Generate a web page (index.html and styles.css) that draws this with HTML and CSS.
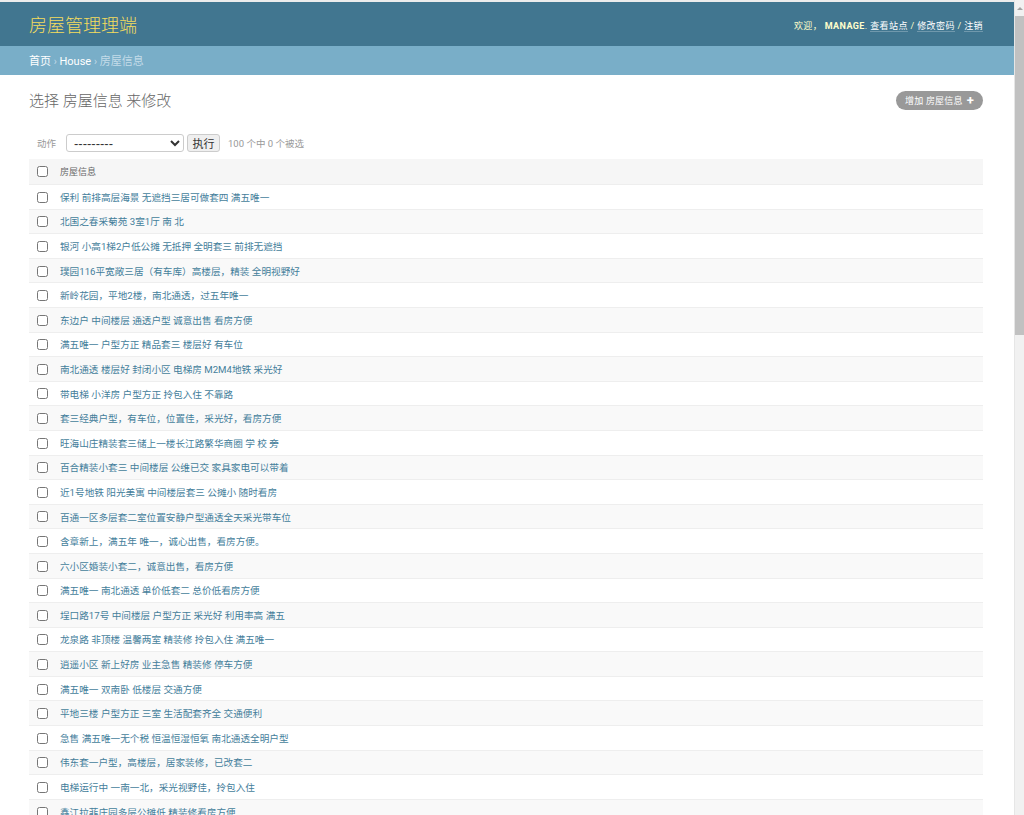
FILE: index.html
```html
<!DOCTYPE html>
<html lang="zh-hans">
<head>
<meta charset="utf-8">
<title>选择 房屋信息 来修改 | Django 站点管理员</title>
<link rel="stylesheet" href="styles.css">
</head>
<body>
<div class="page">
<div class="topline"></div>
<div id="header">
  <div class="branding"><h1 class="site-name">房屋管理理端</h1></div>
  <div class="user-tools">欢迎， <strong>manage</strong>. <a href="#">查看站点</a> / <a href="#">修改密码</a> / <a href="#">注销</a></div>
</div>
<div class="breadcrumbs"><a href="#">首页</a> <span class="sep">›</span> <a href="#">House</a> <span class="sep">›</span> 房屋信息</div>
<div id="content">
  <div class="content-head">
    <h1 class="page-title">选择 房屋信息 来修改</h1>
    <a href="#" class="addlink">增加 房屋信息 <span class="plus">+</span></a>
  </div>
  <div class="actions">
    <label class="action-label">动作</label>
    <select class="action-select"><option>---------</option></select>
    <button class="go-button" type="button">执行</button>
    <span class="action-counter">100 个中 0 个被选</span>
  </div>
  <table class="result-list">
    <thead>
      <tr><th class="cb-col"><input type="checkbox"></th><th class="title-col">房屋信息</th></tr>
    </thead>
    <tbody>
      <tr><td class="cb-col"><input type="checkbox"></td><th><a href="#">保利 前排高层海景 无遮挡三居可做套四 满五唯一</a></th></tr>
      <tr><td class="cb-col"><input type="checkbox"></td><th><a href="#">北国之春采菊苑 3室1厅 南 北</a></th></tr>
      <tr><td class="cb-col"><input type="checkbox"></td><th><a href="#">银河 小高1梯2户低公摊 无抵押 全明套三 前排无遮挡</a></th></tr>
      <tr><td class="cb-col"><input type="checkbox"></td><th><a href="#">璞园116平宽敞三居（有车库）高楼层，精装 全明视野好</a></th></tr>
      <tr><td class="cb-col"><input type="checkbox"></td><th><a href="#">新岭花园，平地2楼，南北通透，过五年唯一</a></th></tr>
      <tr><td class="cb-col"><input type="checkbox"></td><th><a href="#">东边户 中间楼层 通透户型 诚意出售 看房方便</a></th></tr>
      <tr><td class="cb-col"><input type="checkbox"></td><th><a href="#">满五唯一 户型方正 精品套三 楼层好 有车位</a></th></tr>
      <tr><td class="cb-col"><input type="checkbox"></td><th><a href="#">南北通透 楼层好 封闭小区 电梯房 M2M4地铁 采光好</a></th></tr>
      <tr><td class="cb-col"><input type="checkbox"></td><th><a href="#">带电梯 小洋房 户型方正 拎包入住 不靠路</a></th></tr>
      <tr><td class="cb-col"><input type="checkbox"></td><th><a href="#">套三经典户型，有车位，位置佳，采光好，看房方便</a></th></tr>
      <tr><td class="cb-col"><input type="checkbox"></td><th><a href="#">旺海山庄精装套三储上一楼长江路繁华商圈 学 校 旁</a></th></tr>
      <tr><td class="cb-col"><input type="checkbox"></td><th><a href="#">百合精装小套三 中间楼层 公维已交 家具家电可以带着</a></th></tr>
      <tr><td class="cb-col"><input type="checkbox"></td><th><a href="#">近1号地铁 阳光美寓 中间楼层套三 公摊小 随时看房</a></th></tr>
      <tr><td class="cb-col"><input type="checkbox"></td><th><a href="#">百通一区多层套二室位置安静户型通透全天采光带车位</a></th></tr>
      <tr><td class="cb-col"><input type="checkbox"></td><th><a href="#">含章新上，满五年 唯一，诚心出售，看房方便。</a></th></tr>
      <tr><td class="cb-col"><input type="checkbox"></td><th><a href="#">六小区婚装小套二，诚意出售，看房方便</a></th></tr>
      <tr><td class="cb-col"><input type="checkbox"></td><th><a href="#">满五唯一 南北通透 单价低套二 总价低看房方便</a></th></tr>
      <tr><td class="cb-col"><input type="checkbox"></td><th><a href="#">埕口路17号 中间楼层 户型方正 采光好 利用率高 满五</a></th></tr>
      <tr><td class="cb-col"><input type="checkbox"></td><th><a href="#">龙泉路 非顶楼 温馨两室 精装修 拎包入住 满五唯一</a></th></tr>
      <tr><td class="cb-col"><input type="checkbox"></td><th><a href="#">逍遥小区 新上好房 业主急售 精装修 停车方便</a></th></tr>
      <tr><td class="cb-col"><input type="checkbox"></td><th><a href="#">满五唯一 双南卧 低楼层 交通方便</a></th></tr>
      <tr><td class="cb-col"><input type="checkbox"></td><th><a href="#">平地三楼 户型方正 三室 生活配套齐全 交通便利</a></th></tr>
      <tr><td class="cb-col"><input type="checkbox"></td><th><a href="#">急售 满五唯一无个税 恒温恒湿恒氧 南北通透全明户型</a></th></tr>
      <tr><td class="cb-col"><input type="checkbox"></td><th><a href="#">伟东套一户型，高楼层，居家装修，已改套二</a></th></tr>
      <tr><td class="cb-col"><input type="checkbox"></td><th><a href="#">电梯运行中 一南一北，采光视野佳，拎包入住</a></th></tr>
      <tr><td class="cb-col"><input type="checkbox"></td><th><a href="#">鑫江拉菲庄园多层公摊低 精装修看房方便</a></th></tr>
      <tr><td class="cb-col"><input type="checkbox"></td><th><a href="#">中庭位置 安静舒适 南北通透 满二年</a></th></tr>
      <tr><td class="cb-col"><input type="checkbox"></td><th><a href="#">地铁口 精装两室 家具家电齐全 拎包入住</a></th></tr>
      <tr><td class="cb-col"><input type="checkbox"></td><th><a href="#">低总价 小户型 中间楼层 采光充足</a></th></tr>
      <tr><td class="cb-col"><input type="checkbox"></td><th><a href="#">学区房 满五唯一 楼层好 看房方便</a></th></tr>
      <tr><td class="cb-col"><input type="checkbox"></td><th><a href="#">花园洋房 赠送面积大 南北通透 有车位</a></th></tr>
      <tr><td class="cb-col"><input type="checkbox"></td><th><a href="#">高层视野好 电梯房 户型方正 诚心出售</a></th></tr>
      <tr><td class="cb-col"><input type="checkbox"></td><th><a href="#">老城区 配套成熟 交通便利 随时看房</a></th></tr>
      <tr><td class="cb-col"><input type="checkbox"></td><th><a href="#">精装套二 中间楼层 业主诚售 价格可谈</a></th></tr>
      <tr><td class="cb-col"><input type="checkbox"></td><th><a href="#">大三居 双卫 南北通透 采光好 满五唯一</a></th></tr>
      <tr><td class="cb-col"><input type="checkbox"></td><th><a href="#">临近公园 环境优美 低楼层 看房方便</a></th></tr>
      <tr><td class="cb-col"><input type="checkbox"></td><th><a href="#">新小区 品牌物业 精装修 拎包入住</a></th></tr>
      <tr><td class="cb-col"><input type="checkbox"></td><th><a href="#">套一 带阳台 朝南 采光好 总价低</a></th></tr>
      <tr><td class="cb-col"><input type="checkbox"></td><th><a href="#">商圈中心 生活便利 户型方正 有钥匙</a></th></tr>
      <tr><td class="cb-col"><input type="checkbox"></td><th><a href="#">顶楼带露台 视野开阔 诚意出售</a></th></tr>
    </tbody>
  </table>
  <p class="paginator">100 房屋信息</p>
</div>
</div>
<div class="scrollbar" aria-hidden="true">
  <div class="sb-button"><span class="sb-arrow"></span></div>
  <div class="sb-thumb"></div>
  <div class="sb-track"></div>
</div>
</body>
</html>
```

FILE: styles.css
```css
html, body {
  margin: 0;
  padding: 0;
}
body {
  font-family: Roboto, "Noto Sans CJK SC", "DejaVu Sans", sans-serif;
  font-size: 10px;
  color: #333;
  background: #fff;
  display: flex;
  align-items: flex-start;
}
a {
  text-decoration: none;
}
.page {
  flex: 1;
  min-width: 0;
}
.scrollbar {
  position: sticky;
  top: 0;
  width: 9px;
  height: 100vh;
  flex-shrink: 0;
  display: flex;
  flex-direction: column;
  background: #f1f1f1;
  border-left: 1px solid #e6e6e6;
}
.sb-button {
  height: 16px;
  display: flex;
  justify-content: center;
  align-items: center;
}
.sb-arrow {
  width: 0;
  height: 0;
  border-left: 3px solid transparent;
  border-right: 3px solid transparent;
  border-bottom: 3px solid #a3a3a3;
}
.sb-thumb {
  height: 319px;
  background: #c1c1c1;
}
.sb-track {
  flex: 1;
}
.topline {
  height: 2px;
  background: #ececec;
}
#header {
  height: 44px;
  box-sizing: border-box;
  background: #417690;
  padding: 3px 31px 0 29px;
  display: flex;
  align-items: center;
  justify-content: space-between;
}
.site-name {
  margin: 0;
  font-size: 18px;
  font-weight: 300;
  color: #f5dd5d;
  line-height: 22px;
}
.user-tools {
  font-size: 9px;
  letter-spacing: 0.4px;
  color: #ffc;
  text-transform: uppercase;
}
.user-tools strong {
  font-weight: 700;
}
.user-tools a {
  color: #fff;
  border-bottom: 1px solid rgba(255, 255, 255, 0.25);
}
.breadcrumbs {
  height: 29px;
  box-sizing: border-box;
  padding: 2px 29px 0;
  line-height: 27px;
  background: #79aec8;
  font-size: 11px;
  color: #c4dce8;
}
.breadcrumbs a {
  color: #fff;
}
.breadcrumbs .sep {
  font-size: 10px;
}
#content {
  padding: 16px 31px 20px 29px;
}
.content-head {
  display: flex;
  align-items: center;
  justify-content: space-between;
  height: 19px;
}
.page-title {
  margin: 0;
  padding-top: 2px;
  font-size: 15px;
  font-weight: 300;
  color: #666;
  line-height: 19px;
}
.addlink {
  display: inline-flex;
  align-items: center;
  height: 19px;
  box-sizing: border-box;
  padding: 0 9px 0 9px;
  border-radius: 10px;
  background: #999;
  color: #fff;
  font-size: 9px;
  letter-spacing: 0.2px;
}
.addlink .plus {
  font-size: 13px;
  font-weight: 700;
  margin-left: 4px;
  line-height: 1;
}
.actions {
  margin-top: 24px;
  height: 18px;
  display: flex;
  align-items: center;
  padding-left: 8px;
}
.action-label {
  font-size: 9.5px;
  color: #999;
  margin-right: 10px;
}
.action-select {
  width: 118px;
  height: 18px;
  font-size: 13px;
  font-family: "Liberation Sans", Arial, sans-serif;
  border: 1px solid #ccc;
  border-radius: 3px;
  padding: 0 3px;
  background: #fff;
  color: #333;
}
.go-button {
  margin-left: 3px;
  height: 18px;
  width: 33px;
  padding: 0;
  font-size: 11px;
  font-family: Roboto, "Noto Sans CJK SC", sans-serif;
  background: #efefef;
  border: 1px solid #ccc;
  border-radius: 3px;
  color: #333;
}
.action-counter {
  margin-left: 8px;
  font-size: 9.5px;
  color: #999;
}
.result-list {
  margin-top: 7px;
  width: 100%;
  border-collapse: collapse;
}
.result-list thead th {
  height: 25px;
  background: #f6f6f6;
  border-bottom: 1px solid #eee;
  font-size: 9px;
  font-weight: 400;
  color: #666;
  text-align: left;
  padding: 0 0 0 5px;
}
.result-list thead th.cb-col,
.result-list td.cb-col {
  width: 26px;
  padding: 0;
  text-align: center;
}
.result-list input[type="checkbox"] {
  width: 11px;
  height: 11px;
  margin: 0;
  vertical-align: middle;
}
.result-list tbody th,
.result-list tbody td {
  height: 24.6px;
  box-sizing: border-box;
  border-bottom: 1px solid #eee;
  padding: 0;
}
.result-list tbody th {
  text-align: left;
  font-weight: 400;
  padding-left: 5px;
  font-size: 9.65px;
}
.result-list tbody tr:nth-child(even) {
  background: #f9f9f9;
}
.result-list tbody a {
  color: #447e9b;
}
.paginator {
  margin: 0;
  padding: 8px 8px;
  font-size: 10px;
  color: #666;
}
```
